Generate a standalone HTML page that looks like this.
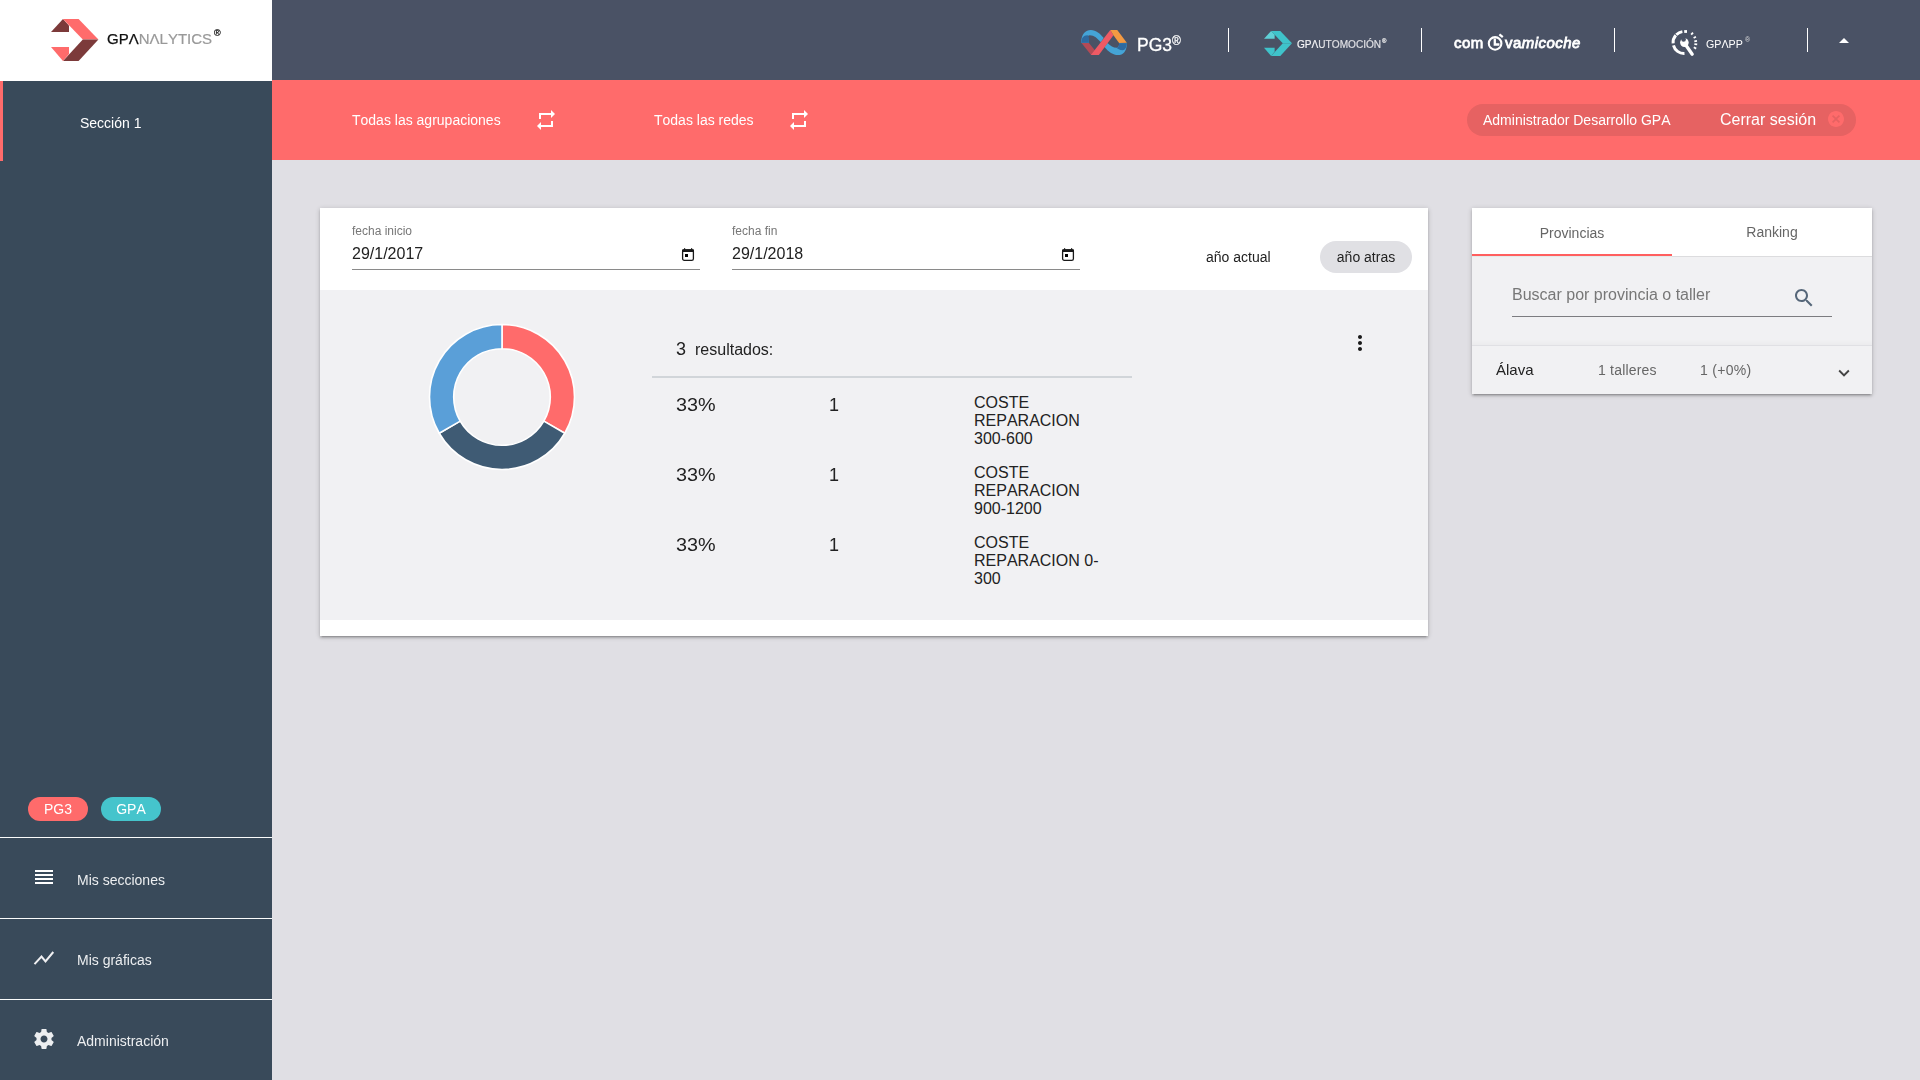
<!DOCTYPE html>
<html><head><meta charset="utf-8">
<style>
*{box-sizing:border-box;margin:0;padding:0}
html,body{width:1920px;height:1080px;overflow:hidden}
body{-webkit-font-smoothing:antialiased;font-kerning:none;position:relative;background:#e0dfe4;font-family:"Liberation Sans",sans-serif;color:#222}
.abs{position:absolute}
svg{position:absolute;overflow:visible}
#logo{left:0;top:0;width:272px;height:81px;background:#fff}
#hdr{left:272px;top:0;width:1648px;height:80px;background:#4a5265}
#side{left:0;top:81px;width:272px;height:999px;background:#394a5a}
#bar{left:272px;top:80px;width:1648px;height:80px;background:#ff6b6b}
.t{position:absolute;white-space:nowrap;line-height:1;will-change:transform}
.sep{position:absolute;top:28px;width:1.4px;height:24px;background:#fff}
.card{position:absolute;background:#fff;box-shadow:0 2px 2px 0 rgba(0,0,0,.14),0 3px 1px -2px rgba(0,0,0,.12),0 1px 5px 0 rgba(0,0,0,.2)}
.w{color:#fff}
.hr{position:absolute;left:0;width:272px;height:1px;background:#fafcfb}
</style></head><body>
<div id="logo" class="abs"></div>
<div id="hdr" class="abs"></div>
<div id="side" class="abs"></div>
<div id="bar" class="abs"></div>

<!-- ===== LOGO GPANALYTICS ===== -->
<svg style="left:0;top:0" width="272" height="81">
  <polygon points="51,32 63,19 69,25.5 69,32" fill="#7c3a3a"/>
  <polygon points="63,19 78.6,19 98.4,39.6 82.8,39.6" fill="#ff6b6b"/>
  <polygon points="82.8,39.6 98.4,39.6 78.6,61 63,61" fill="#7c3a3a"/>
  <polygon points="51,47 69,47 69,54 63,61" fill="#ff6b6b"/>
</svg>
<div class="t" style="left:107px;top:31px;font-size:15px;color:#111;-webkit-text-stroke:0.25px #111">GPΛ<span style="color:#999;-webkit-text-stroke:0.2px #999">NΛLYTICS</span></div>
<div class="t" style="left:213.5px;top:28.5px;font-size:9px;color:#222;-webkit-text-stroke:0.3px #222">®</div>

<!-- ===== HEADER LOGOS ===== -->
<svg style="left:1076px;top:26px" width="56" height="34" viewBox="0 0 1779 1080">
  <path d="M165,530 C165,250 310,125 470,125 C640,125 770,240 880,385 L790,515 C690,395 570,290 440,290 C330,290 410,400 410,530 Z" fill="#45a4d6"/>
  <path d="M170,530 C175,380 230,290 360,290 C420,290 410,420 410,530 Z" fill="#2e6aa0"/>
  <path d="M1000,540 L905,670 C1040,830 1180,925 1330,925 C1500,925 1615,800 1615,545 L1370,545 C1370,640 1340,690 1290,690 C1180,690 1100,640 1000,540 Z" fill="#45a4d6"/>
  <path d="M1370,545 L1615,545 C1612,680 1560,760 1480,770 C1390,770 1310,720 1290,690 C1340,690 1370,640 1370,545 Z" fill="#2e6aa0"/>
  <polygon points="175,540 410,540 600,770 480,925" fill="#b44a55"/>
  <polygon points="470,925 725,925 1190,290 1090,130" fill="#ef5a64"/>
  <polygon points="1090,130 1310,130 1615,530 1370,540 1190,290" fill="#f49a42"/>
</svg>
<div class="t w" style="left:1136.5px;top:37px;font-size:17.5px;-webkit-text-stroke:0.3px #fff">PG3</div>
<div class="t w" style="left:1172px;top:34.5px;font-size:12px;-webkit-text-stroke:0.2px #fff">®</div>
<div class="sep" style="left:1227.8px"></div>

<svg style="left:1264px;top:31px" width="28" height="25" viewBox="51 19 47.4 42" preserveAspectRatio="none">
  <polygon points="51,32 63,19 69,25.5 69,32" fill="#5fd0d6"/>
  <polygon points="63,19 78.6,19 98.4,39.6 82.8,39.6" fill="#3fc3ca"/>
  <polygon points="82.8,39.6 98.4,39.6 78.6,61 63,61" fill="#3fc3ca"/>
  <polygon points="51,47 69,47 69,54 63,61" fill="#3fc3ca"/>
</svg>
<div class="t" style="left:1297px;top:39.5px;font-size:10.1px;color:#f6f6f8;-webkit-text-stroke:0.15px #f6f6f8">GPΛ<span style="color:#dcdce0">UTOMOCIÓN</span></div>
<div class="t" style="left:1382px;top:37.5px;font-size:6px;color:#eee;-webkit-text-stroke:0.2px #eee">®</div>
<div class="sep" style="left:1420.8px"></div>

<div class="t w" style="left:1454px;top:34.6px;font-size:15px;letter-spacing:0.4px;-webkit-text-stroke:0.8px #fff">com</div>
<svg style="left:1486px;top:34px" width="20" height="20">
  <circle cx="9.1" cy="9.4" r="6.3" fill="none" stroke="#fff" stroke-width="2.1"/>
  <path d="M8.8,4.6 V10.5 H13.4" fill="none" stroke="#fff" stroke-width="2.3"/>
  <path d="M13.4,0.4 L16.8,3.2" stroke="#fff" stroke-width="2.3"/>
</svg>
<div class="t w" style="left:1505px;top:34.6px;font-size:15px;letter-spacing:0.45px;-webkit-text-stroke:0.8px #fff">va<i>micoche</i></div>
<div class="sep" style="left:1613.8px"></div>

<svg style="left:1666px;top:26px" width="36" height="34">
  <g fill="none" stroke="#fff" stroke-width="3">
    <path d="M10.32,8.72 A11,11 0 0 1 16.38,5.64"/>
    <path d="M7.14,17.46 A11,11 0 0 1 9.80,9.28"/>
    <path d="M18.48,27.49 A11,11 0 0 1 7.47,19.35"/>
  </g>
  <rect x="18.2" y="4.1" width="2.8" height="2.8" fill="#fff"/>
  <g stroke="#fff" stroke-width="1.8">
    <path d="M25.2,8.6 L27.0,6.6"/>
    <path d="M27.6,12.0 L29.9,10.8"/>
    <path d="M28.3,15.3 L31.0,14.8"/>
    <path d="M28.4,18.1 L31.2,18.4"/>
    <path d="M27.8,21.3 L30.2,22.6"/>
  </g>
  <path d="M19.6,18.8 L26.2,28.2" stroke="#fff" stroke-width="3.3" stroke-linecap="round"/>
  <circle cx="18.4" cy="16.6" r="4.3" fill="#fff"/>
  <circle cx="17.6" cy="13.4" r="2.3" fill="#4a5265"/>
</svg>
<div class="t w" style="left:1706px;top:39.2px;font-size:10.7px">GPΛPP</div>
<div class="t" style="left:1745px;top:36px;font-size:7px;color:#ddd">®</div>
<div class="sep" style="left:1806.8px"></div>
<svg style="left:1832px;top:29px" width="24" height="24" viewBox="0 0 24 24"><path d="M7 14l5-5 5 5z" fill="#fff"/></svg>

<!-- ===== SIDEBAR ===== -->
<div class="abs" style="left:0;top:81px;width:3px;height:80px;background:#ff6b6b"></div>
<div class="t w" style="left:80px;top:115.5px;font-size:14px">Sección 1</div>

<div class="abs" style="left:28px;top:797px;width:60px;height:24px;border-radius:12px;background:#ff6b6b"></div>
<div class="t w" style="left:28px;top:802px;width:60px;text-align:center;font-size:14px">PG3</div>
<div class="abs" style="left:101px;top:797px;width:60px;height:24px;border-radius:12px;background:#45c4cc"></div>
<div class="t w" style="left:101px;top:802px;width:60px;text-align:center;font-size:14px">GPA</div>

<div class="hr" style="top:837px"></div>
<div class="hr" style="top:918px"></div>
<div class="hr" style="top:999px"></div>

<svg style="left:32px;top:865px" width="24" height="24">
  <rect x="3" y="5" width="18" height="2" fill="#fff"/><rect x="3" y="9" width="18" height="2" fill="#fff"/>
  <rect x="3" y="13" width="18" height="2" fill="#fff"/><rect x="3" y="17" width="18" height="2" fill="#fff"/>
</svg>
<div class="t" style="left:77px;top:872.5px;font-size:14px;color:#eceef0">Mis secciones</div>

<svg style="left:32px;top:946px" width="24" height="24">
  <polyline points="2.5,18.1 9.5,10.6 13.5,15.4 21.3,6.0" fill="none" stroke="#f0f0f2" stroke-width="2"/>
</svg>
<div class="t" style="left:77px;top:952.5px;font-size:14px;color:#eceef0">Mis gráficas</div>

<svg style="left:32px;top:1027px" width="24" height="24" viewBox="0 0 24 24">
  <path fill="#eceef0" d="M19.43 12.98c.04-.32.07-.64.07-.98s-.03-.66-.07-.98l2.11-1.65c.19-.15.24-.42.12-.64l-2-3.46c-.12-.22-.39-.3-.61-.22l-2.490 1c-.52-.4-1.08-.73-1.69-.98l-.38-2.65C14.46 2.18 14.25 2 14 2h-4c-.25 0-.46.18-.49.42l-.38 2.65c-.61.25-1.170.59-1.690.98l-2.49-1c-.23-.09-.49 0-.61.22l-2 3.46c-.13.22-.07.49.12.64l2.11 1.65c-.04.32-.07.65-.07.98s.03.66.07.98l-2.11 1.65c-.19.15-.24.42-.12.64l2 3.46c.12.22.39.3.61.22l2.49-1c.52.4 1.08.73 1.69.98l.38 2.65c.03.24.24.42.49.42h4c.25 0 .46-.18.49-.42l.38-2.65c.61-.25 1.17-.59 1.69-.98l2.49 1c.23.09.49 0 .61-.22l2-3.46c.12-.22.07-.49-.12-.64l-2.11-1.65zM12 15.5c-1.93 0-3.5-1.57-3.5-3.5s1.57-3.5 3.5-3.5 3.5 1.57 3.5 3.5-1.57 3.5-3.5 3.5z"/>
</svg>
<div class="t" style="left:77px;top:1033.5px;font-size:14px;color:#eceef0">Administración</div>

<!-- ===== RED BAR ===== -->
<div class="t w" style="left:352px;top:113px;font-size:14px">Todas las agrupaciones</div>
<svg style="left:534px;top:108px" width="24" height="24" viewBox="0 0 24 24"><path fill="#fff" d="M7 7h10v3l4-4-4-4v3H5v6h2V7zm10 10H7v-3l-4 4 4 4v-3h12v-6h-2v4z"/></svg>
<div class="t w" style="left:654px;top:113px;font-size:14px">Todas las redes</div>
<svg style="left:787px;top:108px" width="24" height="24" viewBox="0 0 24 24"><path fill="#fff" d="M7 7h10v3l4-4-4-4v3H5v6h2V7zm10 10H7v-3l-4 4 4 4v-3h12v-6h-2v4z"/></svg>

<div class="abs" style="left:1467px;top:104px;width:389px;height:32px;border-radius:16px;background:#e66262"></div>
<div class="t w" style="left:1483px;top:113px;font-size:14px">Administrador Desarrollo GPA</div>
<div class="t w" style="left:1720px;top:112px;font-size:16px">Cerrar sesión</div>
<svg style="left:1828px;top:111px" width="16" height="16" viewBox="2 2 20 20"><path fill="#ff6b6b" d="M12 2C6.47 2 2 6.47 2 12s4.47 10 10 10 10-4.470 10-10S17.53 2 12 2zm5 13.59L15.59 17 12 13.41 8.41 17 7 15.59 10.59 12 7 8.41 8.41 7 12 10.590 15.59 7 17 8.41 13.41 12 17 15.59z"/></svg>

<!-- ===== MAIN CARD ===== -->
<div class="card" style="left:320px;top:208px;width:1108px;height:428px">
  <div class="abs" style="left:0;top:82px;width:1108px;height:330px;background:#f1f1f3"></div>
</div>
<div class="t" style="left:352px;top:225px;font-size:12px;color:#777">fecha inicio</div>
<div class="t" style="left:352px;top:246px;font-size:16px;color:#222">29/1/2017</div>
<div class="abs" style="left:352px;top:269px;width:348px;height:1px;background:#8a8a8a"></div>
<div class="t" style="left:732px;top:225px;font-size:12px;color:#777">fecha fin</div>
<div class="t" style="left:732px;top:246px;font-size:16px;color:#222">29/1/2018</div>
<div class="abs" style="left:732px;top:269px;width:348px;height:1px;background:#8a8a8a"></div>
<svg style="left:681px;top:246px" width="14" height="16">
  <rect x="1.6" y="3.9" width="10.8" height="10.4" rx="1.6" fill="none" stroke="#1a1a1a" stroke-width="1.3"/>
  <rect x="1" y="3.3" width="12" height="2.7" rx="1" fill="#1a1a1a"/>
  <rect x="3" y="2.2" width="1.2" height="2" fill="#1a1a1a"/><rect x="10" y="2.2" width="1.2" height="2" fill="#1a1a1a"/>
  <rect x="4" y="8" width="3" height="3" fill="#000"/>
</svg>
<svg style="left:1061px;top:246px" width="14" height="16">
  <rect x="1.6" y="3.9" width="10.8" height="10.4" rx="1.6" fill="none" stroke="#1a1a1a" stroke-width="1.3"/>
  <rect x="1" y="3.3" width="12" height="2.7" rx="1" fill="#1a1a1a"/>
  <rect x="3" y="2.2" width="1.2" height="2" fill="#1a1a1a"/><rect x="10" y="2.2" width="1.2" height="2" fill="#1a1a1a"/>
  <rect x="4" y="8" width="3" height="3" fill="#000"/>
</svg>
<div class="t" style="left:1206px;top:250px;font-size:14px;color:#222">año actual</div>
<div class="abs" style="left:1320px;top:241px;width:92px;height:32px;border-radius:16px;background:#e0e0e4"></div>
<div class="t" style="left:1320px;top:250px;width:92px;text-align:center;font-size:14px;color:#222">año atras</div>

<!-- donut -->
<svg style="left:420px;top:315px" width="164" height="164" viewBox="0 0 164 164">
  <g transform="translate(82,82)" stroke="#fff" stroke-width="1.6" stroke-linejoin="round">
    <path d="M0,-72.5 A72.5,72.5 0 0 1 62.79,36.25 L41.83,24.15 A48.3,48.3 0 0 0 0,-48.3 Z" fill="#ff6b6b"/>
    <path d="M62.79,36.25 A72.5,72.5 0 0 1 -62.79,36.25 L-41.83,24.15 A48.3,48.3 0 0 0 41.83,24.15 Z" fill="#3f5b74"/>
    <path d="M-62.79,36.25 A72.5,72.5 0 0 1 0,-72.5 L0,-48.3 A48.3,48.3 0 0 0 -41.83,24.15 Z" fill="#5a9fd8"/>
  </g>
</svg>

<div class="t" style="left:676px;top:340px;font-size:18px;color:#222">3</div>
<div class="t" style="left:695px;top:342px;font-size:16px;color:#222">resultados:</div>
<div class="abs" style="left:652px;top:376px;width:480px;height:2px;background:#d1d5d9"></div>

<div class="t" style="left:676px;top:396px;font-size:18px;color:#222;transform:scaleX(1.1);transform-origin:0 0">33%</div>
<div class="t" style="left:828.8px;top:396px;font-size:18px;color:#222">1</div>
<div class="abs" style="left:974px;top:394px;width:140px;font-size:16px;line-height:18px;color:#222">COSTE REPARACION 300-600</div>
<div class="t" style="left:676px;top:466px;font-size:18px;color:#222;transform:scaleX(1.1);transform-origin:0 0">33%</div>
<div class="t" style="left:828.8px;top:466px;font-size:18px;color:#222">1</div>
<div class="abs" style="left:974px;top:464px;width:140px;font-size:16px;line-height:18px;color:#222">COSTE REPARACION 900-1200</div>
<div class="t" style="left:676px;top:536px;font-size:18px;color:#222;transform:scaleX(1.1);transform-origin:0 0">33%</div>
<div class="t" style="left:828.8px;top:536px;font-size:18px;color:#222">1</div>
<div class="abs" style="left:974px;top:534px;width:140px;font-size:16px;line-height:18px;color:#222">COSTE REPARACION 0-300</div>

<svg style="left:1348px;top:331px" width="24" height="24" viewBox="0 0 24 24"><path fill="#1a1a1a" d="M12 8c1.1 0 2-.9 2-2s-.9-2-2-2-2 .9-2 2 .9 2 2 2zm0 2c-1.1 0-2 .9-2 2s.9 2 2 2 2-.9 2-2-.9-2-2-2zm0 6c-1.1 0-2 .9-2 2s.9 2 2 2 2-.9 2-2-.9-2-2-2z"/></svg>

<!-- ===== RIGHT PANEL ===== -->
<div class="card" style="left:1472px;top:208px;width:400px;height:186px">
  <div class="abs" style="left:0;top:48px;width:400px;height:138px;background:#f1f1f3"></div>
  <div class="abs" style="left:0;top:48px;width:400px;height:1px;background:#dcdcde"></div>
  <div class="abs" style="left:0;top:46px;width:200px;height:2px;background:#ff5f5f"></div>
  <div class="abs" style="left:0;top:48px;width:200px;height:1px;background:#e4eaea"></div>
  <div class="abs" style="left:0;top:131px;width:400px;height:6px;background:linear-gradient(rgba(0,0,0,0),rgba(0,0,0,.025))"></div>
  <div class="abs" style="left:0;top:137px;width:400px;height:1px;background:#e0e0e4"></div>
</div>
<div class="t" style="left:1472px;top:225.5px;width:200px;text-align:center;font-size:14px;color:#666">Provincias</div>
<div class="t" style="left:1672px;top:225px;width:200px;text-align:center;font-size:14px;color:#666">Ranking</div>
<div class="t" style="left:1512px;top:287px;font-size:16px;color:#777">Buscar por provincia o taller</div>
<svg style="left:1792px;top:286px" width="24" height="24" viewBox="0 0 24 24"><path fill="#566779" d="M15.5 14h-.79l-.28-.27C15.41 12.59 16 11.11 16 9.5 16 5.91 13.09 3 9.5 3S3 5.91 3 9.5 5.91 16 9.5 16c1.61 0 3.09-.59 4.23-1.57l.27.28v.79l5 4.99L20.49 19l-4.99-5zm-6 0C7.01 14 5 11.99 5 9.5S7.01 5 9.5 5 14 7.01 14 9.5 11.99 14 9.5 14z"/></svg>
<div class="abs" style="left:1512px;top:316px;width:320px;height:1px;background:#7c7c80"></div>
<div class="t" style="left:1496px;top:362px;font-size:15px;color:#222">Álava</div>
<div class="t" style="left:1598px;top:363px;font-size:14px;color:#666;letter-spacing:0.2px">1 talleres</div>
<div class="t" style="left:1700px;top:363px;font-size:14px;color:#666;letter-spacing:0.3px">1 (+0%)</div>
<svg style="left:1833px;top:362px" width="22" height="22" viewBox="0 0 24 24"><path fill="#444" d="M16.59 8.59L12 13.17 7.41 8.59 6 10l6 6 6-6z"/></svg>

</body></html>
